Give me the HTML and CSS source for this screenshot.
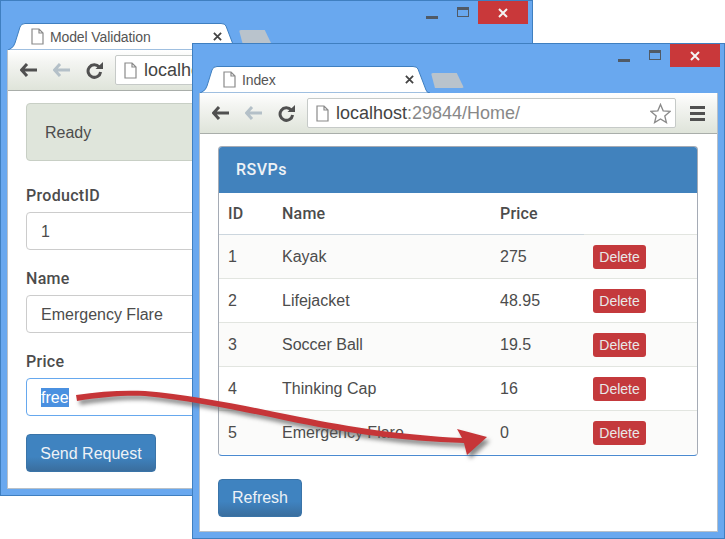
FILE: index.html
```html
<!DOCTYPE html>
<html lang="en">

<head>
    <meta charset="UTF-8">
    <title>Model Validation</title>
    <link rel="stylesheet" href="styles.css">
</head>

<body>
    <svg class="icon-defs" width="0" height="0">
        <symbol id="doc" viewBox="0 0 13 17">
            <path d="M1 1H8L12 5V16H1Z M8 1V5H12" fill="#fff" stroke="#8a8a8a" stroke-width="1.2"/>
        </symbol>
        <symbol id="arrow" viewBox="0 0 17 14">
            <path d="M7 1L1.5 7L7 13M2 7H17" fill="none" stroke="currentColor" stroke-width="3"/>
        </symbol>
        <symbol id="reload" viewBox="0 0 17 17">
            <path d="M13.2 5A6.3 6.3 0 1 0 14.6 10" fill="none" stroke="currentColor" stroke-width="3"/>
            <path d="M9.5 7H17V0Z" fill="currentColor"/>
        </symbol>
        <symbol id="star" viewBox="0 0 22 22">
            <path d="M11 1.5L13.8 8.2L21 8.8L15.5 13.5L17.2 20.5L11 16.8L4.8 20.5L6.5 13.5L1 8.8L8.2 8.2Z" fill="#fff" stroke="#8a8a8a" stroke-width="1.4"/>
        </symbol>
        <symbol id="cross" viewBox="0 0 10 10">
            <path d="M1 1L9 9M9 1L1 9" fill="none" stroke="currentColor" stroke-width="2"/>
        </symbol>
    </svg>

    <div class="desktop">
        <!-- Back window -->
        <div class="window window-back">
            <div class="caption">
                <div class="tab">
                    <svg class="tab-shape" width="230" height="27" viewBox="0 0 230 27"><path d="M0 27L2 26Q6 24 7 20L12 4Q13 .5 17 .5L213 .5Q217 .5 218 3L226 24Q227 27 230 27Z" fill="#fff" stroke="#3f7fc0"/></svg>
                    <svg class="tab-doc" width="13" height="17"><use href="#doc"/></svg>
                    <span class="tab-title">Model Validation</span>
                    <svg class="tab-close" width="9" height="9"><use href="#cross"/></svg>
                </div>
                <div class="new-tab"></div>
                <div class="controls">
                    <span class="minimize"></span>
                    <span class="maximize"></span>
                    <span class="close"><svg width="10" height="10"><use href="#cross"/></svg></span>
                </div>
            </div>
            <div class="win-body">
                <div class="toolbar">
                    <svg class="nav" width="17" height="14"><use href="#arrow"/></svg>
                    <svg class="nav nav-off" width="17" height="14"><use href="#arrow"/></svg>
                    <svg class="nav" width="17" height="17"><use href="#reload"/></svg>
                    <div class="address">
                        <svg width="13" height="17"><use href="#doc"/></svg>
                        <span class="host">localhost</span>
                    </div>
                    <div class="menu"><span></span><span></span><span></span></div>
                </div>
                <div class="page">
                    <div class="alert">Ready</div>
                    <label class="field-label">ProductID</label>
                    <div class="input">1</div>
                    <label class="field-label">Name</label>
                    <div class="input">Emergency Flare</div>
                    <label class="field-label">Price</label>
                    <div class="input input-focus"><span class="selected">free</span></div>
                    <button class="btn btn-send">Send Request</button>
                </div>
            </div>
        </div>

        <!-- Front window -->
        <div class="window window-front">
            <div class="caption">
                <div class="tab">
                    <svg class="tab-shape" width="230" height="27" viewBox="0 0 230 27"><path d="M0 27L2 26Q6 24 7 20L12 4Q13 .5 17 .5L213 .5Q217 .5 218 3L226 24Q227 27 230 27Z" fill="#fff" stroke="#3f7fc0"/></svg>
                    <svg class="tab-doc" width="13" height="17"><use href="#doc"/></svg>
                    <span class="tab-title">Index</span>
                    <svg class="tab-close" width="9" height="9"><use href="#cross"/></svg>
                </div>
                <div class="new-tab"></div>
                <div class="controls">
                    <span class="minimize"></span>
                    <span class="maximize"></span>
                    <span class="close"><svg width="10" height="10"><use href="#cross"/></svg></span>
                </div>
            </div>
            <div class="win-body">
                <div class="toolbar">
                    <svg class="nav" width="17" height="14"><use href="#arrow"/></svg>
                    <svg class="nav nav-off" width="17" height="14"><use href="#arrow"/></svg>
                    <svg class="nav" width="17" height="17"><use href="#reload"/></svg>
                    <div class="address">
                        <svg width="13" height="17"><use href="#doc"/></svg>
                        <span class="host">localhost<span class="host-rest">:29844/Home/</span></span>
                        <svg class="star" width="21" height="21"><use href="#star"/></svg>
                    </div>
                    <div class="menu"><span></span><span></span><span></span></div>
                </div>
                <div class="page">
                    <div class="panel">
                        <div class="panel-heading">RSVPs</div>
                        <table class="rsvps">
                            <thead>
                                <tr><th class="col-id">ID</th><th class="col-name">Name</th><th class="col-price">Price</th><th></th></tr>
                            </thead>
                            <tbody>
                                <tr><td>1</td><td>Kayak</td><td>275</td><td><button class="btn-delete">Delete</button></td></tr>
                                <tr><td>2</td><td>Lifejacket</td><td>48.95</td><td><button class="btn-delete">Delete</button></td></tr>
                                <tr><td>3</td><td>Soccer Ball</td><td>19.5</td><td><button class="btn-delete">Delete</button></td></tr>
                                <tr><td>4</td><td>Thinking Cap</td><td>16</td><td><button class="btn-delete">Delete</button></td></tr>
                                <tr><td>5</td><td>Emergency Flare</td><td>0</td><td><button class="btn-delete">Delete</button></td></tr>
                            </tbody>
                        </table>
                    </div>
                    <button class="btn btn-refresh">Refresh</button>
                </div>
            </div>
        </div>

        <!-- Red callout arrow over both windows -->
        <svg class="callout" width="725" height="539" viewBox="0 0 725 539">
            <path d="M76 395C100 391 125 390 145 391C195 395 250 407 300 417C350 427 400 435 462 438L457 429L487 437L467 455L464 443C400 441 350 433 298 423C250 413 195 401 145 396C125 395 100 397 77 401Z" fill="#c63538"/>
        </svg>
    </div>
</body>

</html>
```

FILE: styles.css
```css
body {
    margin: 0;
    background-color: #fff;
    font-family: "Liberation Sans", Arial, sans-serif;
    font-size: 16px;
    color: #4c4c4c;
}

.icon-defs {
    position: absolute;
}

.desktop {
    position: relative;
    width: 725px;
    height: 539px;
    overflow: hidden;
}

/* Windows */

.window {
    position: absolute;
    width: 533px;
    height: 496px;
    box-sizing: border-box;
    display: flex;
    flex-direction: column;
    background-color: #69a8ef;
    border: 1px solid #3f7fc0;
}

.window-back {
    left: 0;
    top: 0;
}

.window-front {
    left: 192px;
    top: 43px;
}

.caption {
    display: flex;
    height: 49px;
    flex-shrink: 0;
    padding-left: 7px;
}

.tab {
    position: relative;
    display: flex;
    align-items: center;
    box-sizing: border-box;
    width: 230px;
    height: 27px;
    margin-top: 22px;
    padding: 0 16px 0 23px;
    font-size: 14px;
    color: #555;
}

.tab-shape {
    position: absolute;
    left: 0;
    top: 0;
}

.tab-doc,
.tab-title,
.tab-close {
    position: relative;
}

.tab-title {
    margin-left: 6px;
    letter-spacing: -0.12px;
}

.tab-close {
    margin-left: auto;
    color: #444;
}

.new-tab {
    width: 33px;
    height: 15px;
    margin: 29px 0 0 1px;
    background-color: #b9c3cc;
    border-radius: 2px;
    clip-path: polygon(0 0, 78% 0, 100% 100%, 12% 100%);
}

.controls {
    display: flex;
    margin-left: auto;
    margin-right: 4px;
}

.minimize {
    width: 12px;
    height: 3px;
    margin: 15px 19px 0 0;
    background-color: #505a66;
}

.maximize {
    box-sizing: border-box;
    width: 12px;
    height: 10px;
    margin: 6px 9px 0 0;
    border: 1px solid #505a66;
    border-top-width: 3px;
}

.close {
    display: flex;
    align-items: center;
    justify-content: center;
    width: 50px;
    height: 23px;
    background-color: #c9383a;
    color: #f4f4f4;
}

.win-body {
    flex: 1;
    display: flex;
    flex-direction: column;
    margin: 0 6px 6px;
    background-color: #fff;
    border: 1px solid #b8c0c8;
    border-top: none;
}

/* Toolbar */

.toolbar {
    display: flex;
    align-items: center;
    box-sizing: border-box;
    height: 41px;
    padding: 0 12px;
    background: linear-gradient(#fff, #f4f5f2 30%, #dfe4da);
    border-bottom: 1px solid #a9aeaa;
}

.nav {
    flex-shrink: 0;
    margin-right: 16px;
    color: #505050;
}

.nav-off {
    color: #b4c0c8;
}

.nav:nth-child(3) {
    margin-right: 12px;
}

.address {
    flex: 1;
    display: flex;
    align-items: center;
    box-sizing: border-box;
    height: 30px;
    padding: 0 4px 0 8px;
    background-color: #fff;
    border: 1px solid #c6cac8;
    border-radius: 2px;
}

.host {
    margin-left: 7px;
    font-size: 18px;
    color: #444;
}

.host-rest {
    color: #888;
}

.star {
    margin-left: auto;
}

.menu {
    display: flex;
    flex-direction: column;
    gap: 3px;
    margin-left: 14px;
}

.menu span {
    display: block;
    width: 15px;
    height: 3px;
    background-color: #505050;
}

/* Page content */

.page {
    flex: 1;
    padding: 12px 18px 0;
}

.alert {
    box-sizing: border-box;
    height: 58px;
    margin-bottom: 24px;
    padding: 0 18px;
    line-height: 58px;
    background-color: #dfe5db;
    border: 1px solid #c8cfc5;
    border-radius: 4px;
}

.field-label {
    display: block;
    height: 22px;
    margin-bottom: 5px;
    line-height: 22px;
    font-family: Roboto, sans-serif;
    font-weight: 500;
    letter-spacing: 0.3px;
}

.input {
    box-sizing: border-box;
    height: 38px;
    margin-bottom: 18px;
    padding: 0 14px;
    line-height: 38px;
    background-color: #fff;
    border: 1px solid #ccc;
    border-radius: 4px;
}

.input-focus {
    border-color: #66a8ee;
}

.selected {
    padding: 1px 0;
    background-color: #4a90e0;
    color: #fff;
}

.btn {
    display: block;
    box-sizing: border-box;
    height: 38px;
    padding: 0;
    font-family: inherit;
    font-size: 16px;
    color: #eef2f6;
    background: linear-gradient(#3f83c0 60%, #3a6e9e);
    border: 1px solid #3a74a8;
    border-radius: 4px;
}

.btn-send {
    width: 130px;
    margin-top: 17px;
    padding-top: 2px;
}

.btn-refresh {
    width: 84px;
    margin-top: 23px;
}

/* RSVP panel */

.panel {
    box-sizing: border-box;
    width: 480px;
    height: 310px;
    border: 1px solid #a5abb5;
    border-bottom-color: #4a8ad0;
    border-radius: 4px;
    overflow: hidden;
}

.panel-heading {
    box-sizing: border-box;
    height: 46px;
    padding: 0 17px;
    line-height: 46px;
    font-family: Roboto, sans-serif;
    font-weight: 500;
    letter-spacing: 0.5px;
    color: #eef2f6;
    background-color: #4182bd;
}

.rsvps {
    width: 100%;
    table-layout: fixed;
    border-collapse: collapse;
}

.col-id {
    width: 36px;
}

.col-name {
    width: 200px;
}

.col-price {
    width: 75px;
}

.rsvps th,
.rsvps td {
    padding: 0 9px;
    text-align: left;
}

.rsvps th {
    height: 41px;
    font-family: Roboto, sans-serif;
    font-weight: 500;
    letter-spacing: 0.2px;
    border-bottom: 1px solid #ccd6de;
}

.rsvps th:last-child {
    border-bottom-color: #e2e5e0;
}

.rsvps td {
    height: 43px;
    border-bottom: 1px solid #e2e5e0;
}

.rsvps tr:last-child td {
    border-bottom: none;
}

.rsvps tbody tr:nth-child(odd) {
    background-color: #fbfbfa;
}

.btn-delete {
    display: block;
    width: 53px;
    height: 24px;
    padding: 0;
    font-family: inherit;
    font-size: 14px;
    color: #e8e8e8;
    background-color: #c4393c;
    border: none;
    border-radius: 3px;
}

/* Callout */

.callout {
    position: absolute;
    left: 0;
    top: 0;
    filter: drop-shadow(3px 4px 2px rgba(90, 90, 90, 0.7));
}
```
